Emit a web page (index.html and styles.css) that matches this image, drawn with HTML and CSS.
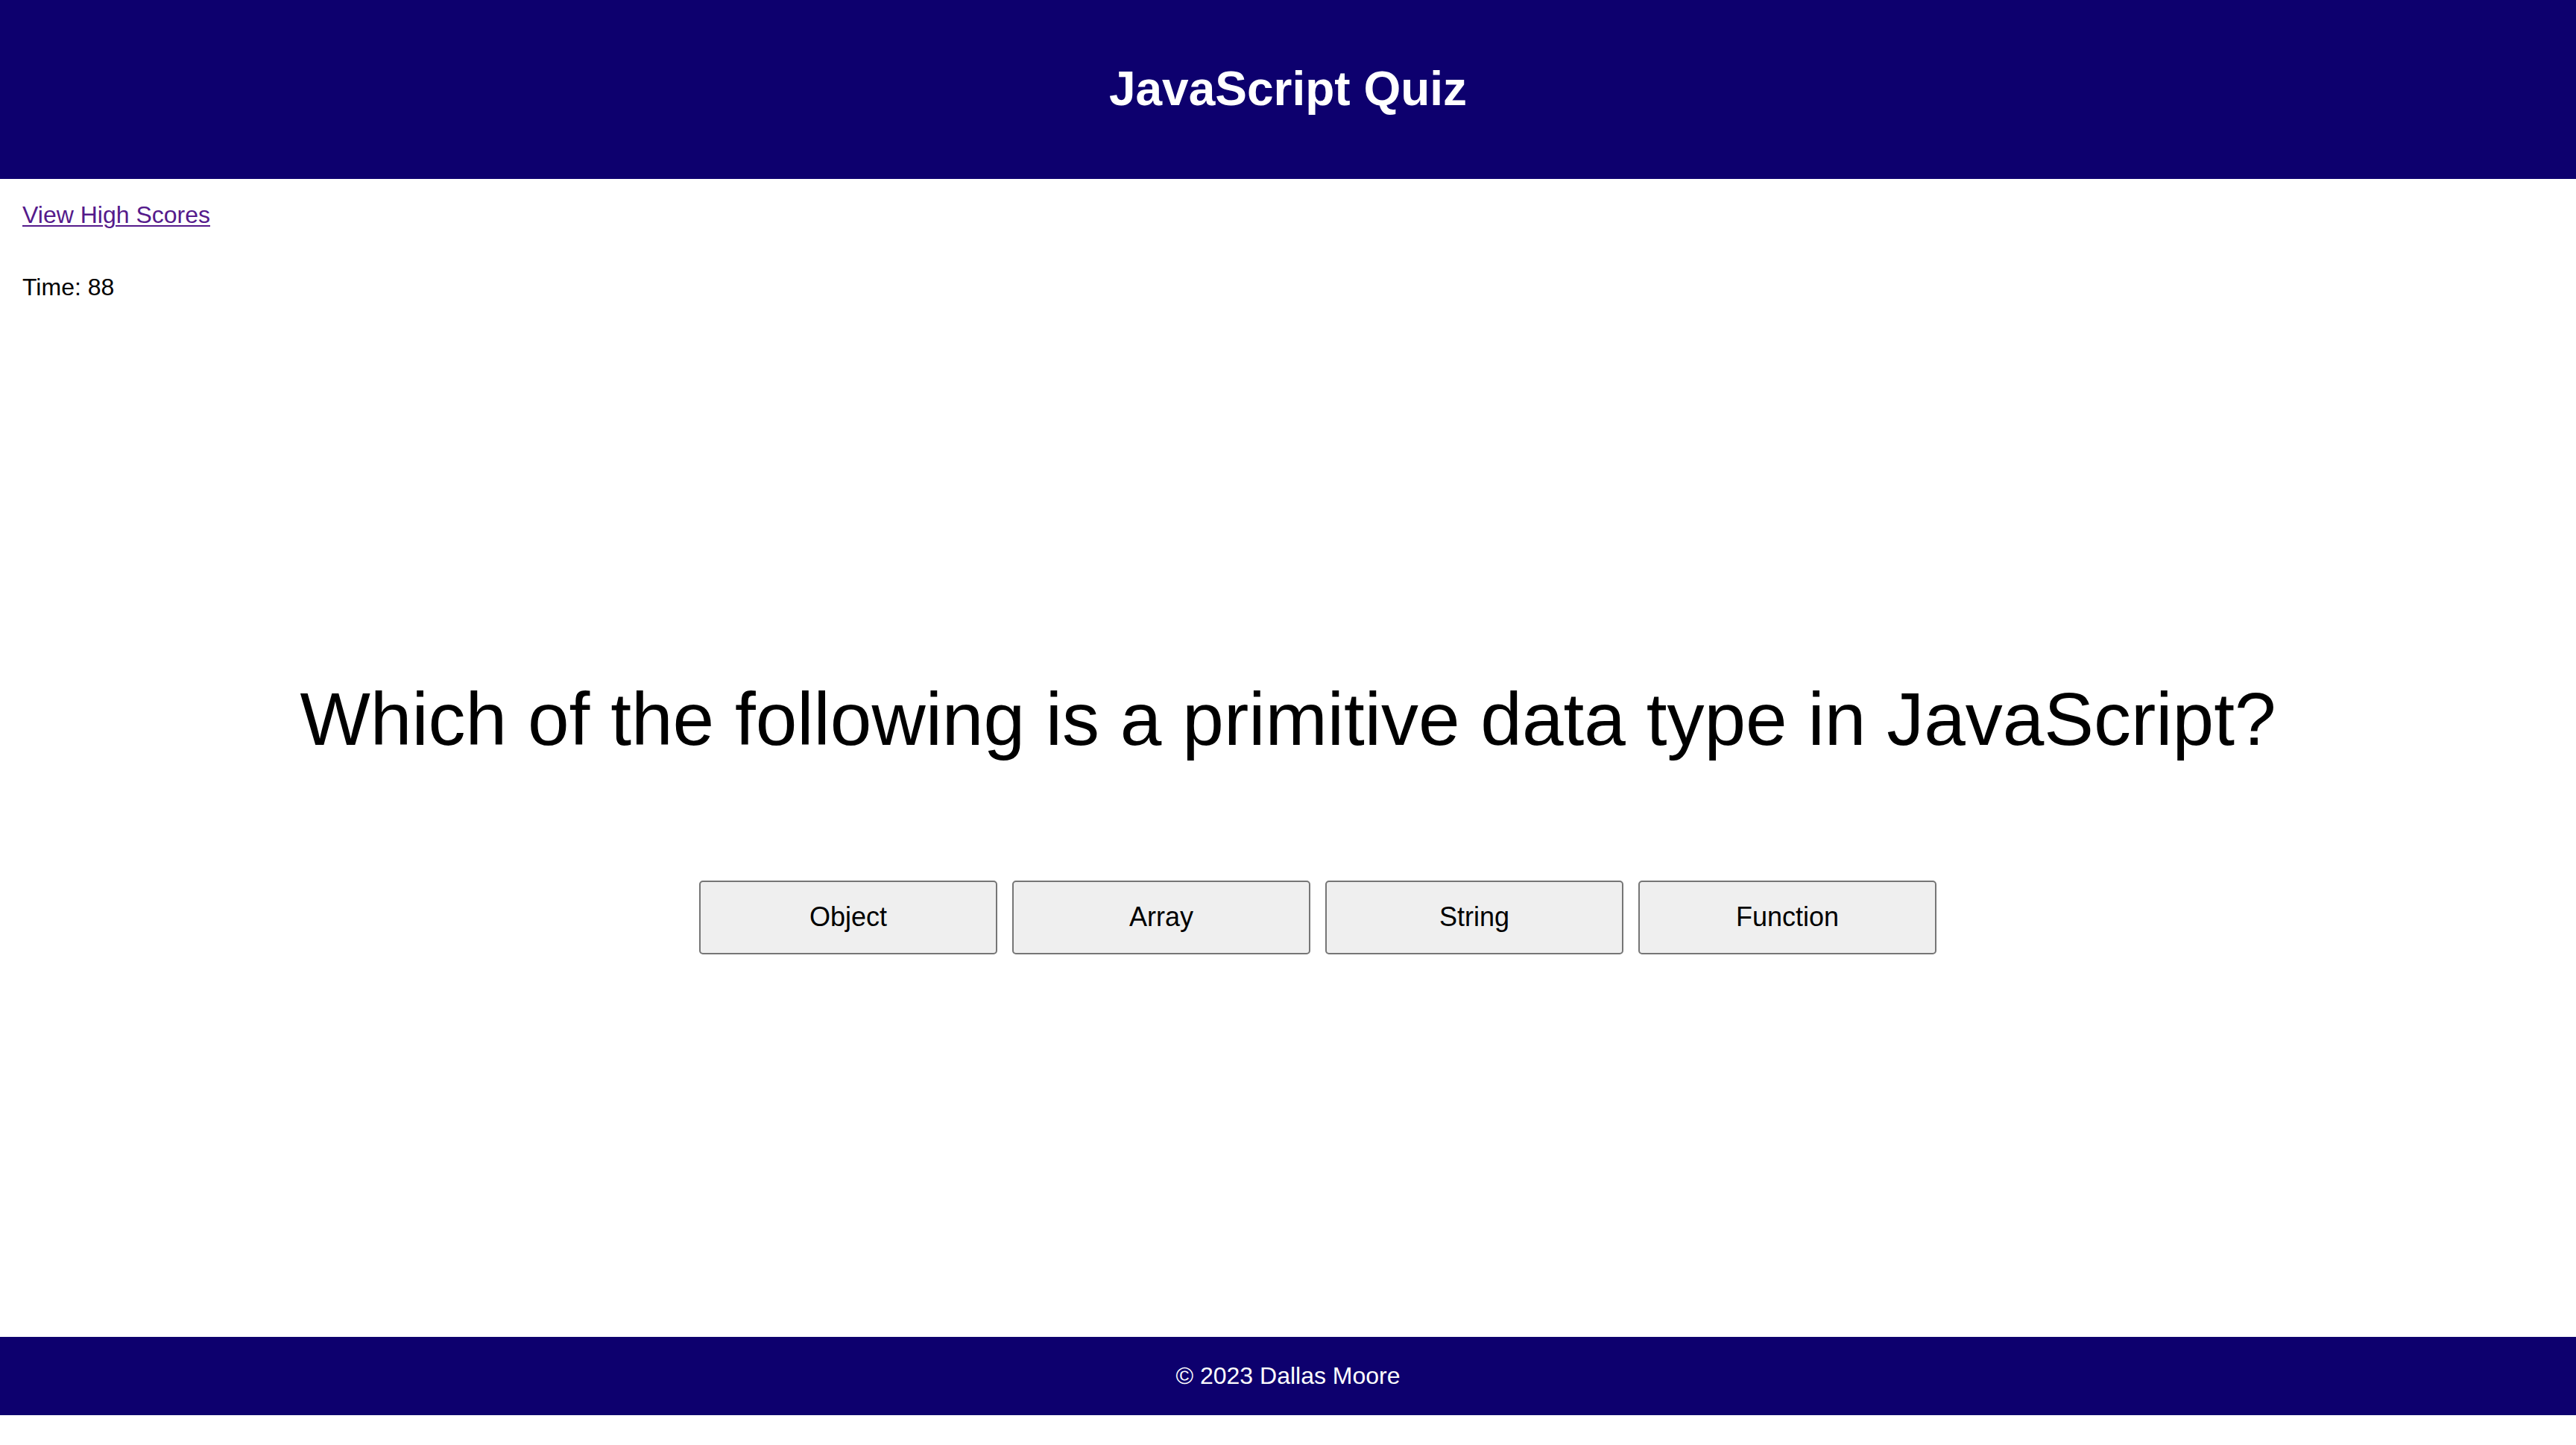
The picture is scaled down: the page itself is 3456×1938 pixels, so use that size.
FILE: index.html
```html
<!DOCTYPE html>
<html lang="en">
<head>
<meta charset="utf-8">
<title>JavaScript Quiz</title>
<link rel="stylesheet" href="styles.css">
</head>
<body>
<header class="site-header">
  <h1 class="site-title">JavaScript Quiz</h1>
</header>
<nav class="top-bar">
  <a class="scores-link" href="#">View High Scores</a>
  <p class="timer">Time: 88</p>
</nav>
<main class="quiz">
  <h2 class="question">Which of the following is a primitive data type in JavaScript?</h2>
  <div class="choices">
    <button class="choice">Object</button>
    <button class="choice">Array</button>
    <button class="choice">String</button>
    <button class="choice">Function</button>
  </div>
</main>
<footer class="site-footer">
  <p class="copyright">© 2023 Dallas Moore</p>
</footer>
</body>
</html>
```
FILE: styles.css
```css
html, body {
  margin: 0;
  padding: 0;
  background: #ffffff;
}

body {
  font-family: "Liberation Sans", Arial, sans-serif;
  font-size: 32px;
  color: #000000;
}

.site-header {
  height: 240px;
  background: #0d006e;
  display: flex;
  align-items: center;
  justify-content: center;
}

.site-title {
  margin: 0;
  color: #ffffff;
  font-size: 64px;
  font-weight: 700;
  line-height: 1.15;
}

.top-bar {
  padding: 30px 0 0 30px;
  display: flex;
  flex-direction: column;
  align-items: flex-start;
}

.scores-link {
  color: #551a8b;
  font-size: 32px;
  line-height: 37px;
  text-decoration: underline;
  text-decoration-thickness: 2px;
  text-underline-offset: 3px;
}

.timer {
  margin: 60px 0 0 0;
  font-size: 32px;
  line-height: 37px;
}

.quiz {
  height: 1378px;
  padding-bottom: 11px;
  display: flex;
  flex-direction: column;
  align-items: center;
  justify-content: center;
}

.question {
  margin: 0;
  font-size: 100px;
  font-weight: 400;
  line-height: 115px;
  text-align: center;
}

.choices {
  margin-top: 159px;
  display: flex;
  gap: 20px;
  align-self: stretch;
  justify-content: center;
  padding-left: 80px;
}

.choice {
  width: 400px;
  height: 99px;
  background: #efefef;
  border: 2px solid #767676;
  border-radius: 5px;
  font-family: "Liberation Sans", Arial, sans-serif;
  font-size: 36px;
  color: #000000;
  padding: 0;
}

.site-footer {
  height: 105px;
  background: #0d006e;
  display: flex;
  align-items: center;
  justify-content: center;
  margin-bottom: 40px;
}

.copyright {
  margin: 0;
  color: #ffffff;
  font-size: 32px;
}
```
